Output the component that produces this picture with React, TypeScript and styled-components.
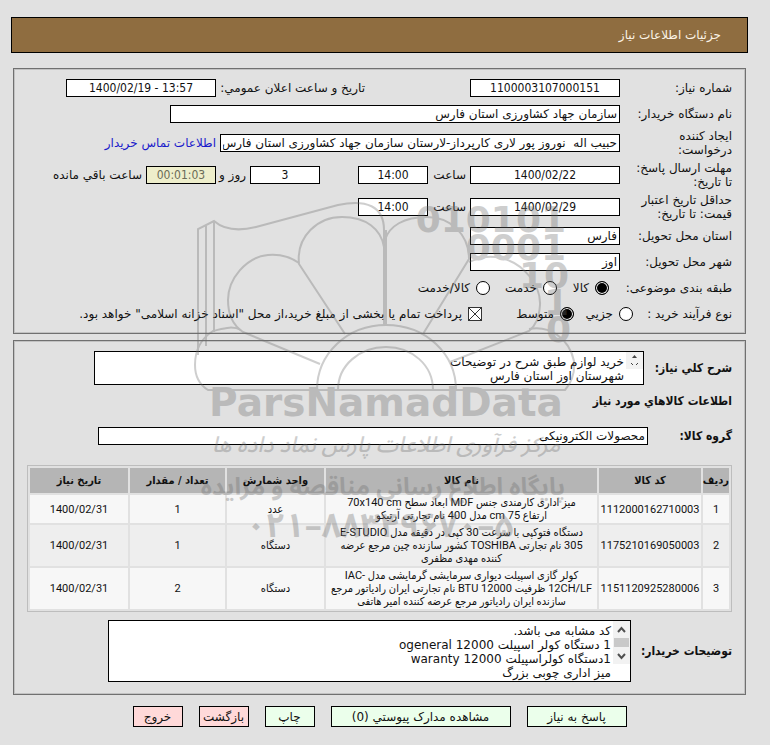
import React, { useId } from "react";
import styled, { createGlobalStyle } from "styled-components";

const GlobalStyle = createGlobalStyle`
  *, *::before, *::after { box-sizing: border-box; }
  body {
    margin: 0;
    background: #e1e1e1;
    color: #111;
    font: 12px/14px "DejaVu Sans", "Noto Sans Arabic", sans-serif;
  }
`;

const Page = styled.main`
  position: relative;
  padding: 17px 22px 17px 11px;
`;

const TitleBar = styled.h1`
  margin: 0 0 15px;
  padding: 0 26px;
  background: #8f6d40;
  border: 1px solid #000;
  color: #fbf3e6;
  font-size: 12px;
  font-weight: 400;
  line-height: 34px;
`;

const Panel = styled.section<{ $pad: string }>`
  margin: 0 2px 6px;
  padding: ${(p) => p.$pad};
  border: 1px solid #707070;
  box-shadow: inset 0 0 0 1px #c2c2c2;
`;

const Row = styled.div<{ $tall?: boolean }>`
  display: flex;
  align-items: center;
  height: ${(p) => (p.$tall ? 32 : 26)}px;
  padding: 0 13px;
  white-space: nowrap;
`;

const Label = styled.label`
  flex: none;
  width: 112px;
`;

const GroupLabel = styled.span<{ $width: number }>`
  flex: none;
  width: ${(p) => p.$width}px;
`;

const SideLabel = styled.label`
  flex: none;
  width: 149px;
  margin-inline-start: 105px;
`;

const Unit = styled.span<{ $width?: number }>`
  flex: none;
  width: ${(p) => (p.$width ? `${p.$width}px` : "auto")};
  padding-inline-start: 4px;
`;

const Field = styled.input<{ $width: number; $center?: boolean; $muted?: boolean; $gap?: number }>`
  width: ${(p) => p.$width}px;
  height: 18px;
  margin: 0;
  margin-inline-start: ${(p) => p.$gap ?? 0}px;
  padding: 0 2px;
  border: 1px solid #000;
  border-radius: 0;
  background: ${(p) => (p.$muted ? "#eeeecb" : "#fff")};
  color: ${(p) => (p.$muted ? "#6b6b58" : "#111")};
  font-family: ${(p) => (p.$center ? '"DejaVu Sans Condensed", ' : "")}"DejaVu Sans", sans-serif;
  font-size: 12px;
  text-align: ${(p) => (p.$center ? "center" : "start")};
`;

const ContactLink = styled.a`
  margin-inline-start: 4px;
  color: #1a1acb;
  text-decoration: none;
`;

const Option = styled.label<{ $width?: number }>`
  display: flex;
  flex: none;
  align-items: center;
  gap: 6px;
  width: ${(p) => (p.$width ? `${p.$width}px` : "auto")};
`;

const Radio = styled.input`
  appearance: none;
  flex: none;
  width: 14px;
  height: 14px;
  margin: 0;
  border: 1px solid #000;
  border-radius: 50%;
  background: #fff;
  &:checked {
    background: #000;
    box-shadow: inset 0 0 0 1px #fff;
  }
`;

const CheckBox = styled.input`
  appearance: none;
  flex: none;
  width: 14px;
  height: 14px;
  margin: 0;
  border: 1px solid #333;
  background: #fff;
  &:checked {
    background:
      linear-gradient(45deg, transparent 46%, #333 47%, #333 53%, transparent 54%),
      linear-gradient(-45deg, transparent 46%, #333 47%, #333 53%, transparent 54%),
      #fff;
  }
`;

const Entry = styled.div<{ $gap?: number }>`
  display: flex;
  align-items: center;
  margin-bottom: ${(p) => p.$gap ?? 0}px;
`;

const BoldLabel = styled.label<{ $width: number }>`
  flex: none;
  width: ${(p) => p.$width}px;
  font-family: "DejaVu Sans Condensed", "DejaVu Sans", sans-serif;
  font-size: 12px;
  font-weight: 700;
  white-space: nowrap;
`;

const Heading = styled.h2`
  margin: 0 0 18px;
  font: 700 12px/16px "DejaVu Sans Condensed", "DejaVu Sans", sans-serif;
`;

const NoteBox = styled.div<{ $width: number; $height: number }>`
  display: flex;
  align-items: flex-start;
  width: ${(p) => p.$width}px;
  height: ${(p) => p.$height}px;
  border: 1px solid #000;
  background: #fff;
`;

const NoteText = styled.textarea`
  flex: 1;
  height: 100%;
  margin: 0;
  padding: 3px 2px 0;
  border: 0;
  outline: 0;
  resize: none;
  overflow: hidden;
  background: transparent;
  color: #111;
  font: 12px/14px "DejaVu Sans", sans-serif;
`;

const ScrollBar = styled.div<{ $height: number }>`
  display: flex;
  flex: none;
  flex-direction: column;
  align-items: center;
  width: 17px;
  height: ${(p) => p.$height}px;
  background: #f2f2f2;
`;

const Table = styled.table`
  width: 100%;
  margin-bottom: 8px;
  border: 1px solid #bdbdbd;
  border-collapse: separate;
  border-spacing: 2px;
  table-layout: fixed;
  background: #e1e1e1;
  font: 11px/13px Roboto, "DejaVu Sans Condensed", "DejaVu Sans", sans-serif;
`;

const Column = styled.col<{ $width?: number }>`
  width: ${(p) => (p.$width ? `${p.$width}px` : "auto")};
`;

const HeadCell = styled.th`
  height: 25px;
  padding: 0;
  background: #b5b5b5;
  font: 700 11px/13px "DejaVu Sans Condensed", "DejaVu Sans", sans-serif;
  white-space: nowrap;
`;

const BodyRow = styled.tr`
  background: #f7f7f7;
  &:nth-child(even) { background: #eee; }
`;

const Cell = styled.td`
  padding: 1px 0;
  text-align: center;
  white-space: nowrap;
`;

const Line = styled.span`
  display: block;
`;

const Actions = styled.div`
  display: flex;
  justify-content: center;
  gap: 16px;
  margin-top: 11px;
`;

const Action = styled.button<{ $width: number; $red?: boolean }>`
  width: ${(p) => p.$width}px;
  height: 21px;
  padding: 0;
  border: 1px solid #000;
  background: ${(p) => (p.$red ? "#ffd9d9" : "#ebffeb")};
  color: #111;
  font: 12px/18px "DejaVu Sans", sans-serif;
  white-space: nowrap;
`;

const Overlay = styled.svg`
  position: absolute;
  top: 195px;
  left: 50%;
  width: 400px;
  height: 360px;
  margin-left: -200px;
  direction: ltr;
  pointer-events: none;
  opacity: 0.33;
`;

function Watermark() {
  return (
    <Overlay viewBox="185 195 400 360" aria-hidden="true">
      <g fill="none" stroke="#6c6c6c" strokeWidth="2">
        <path d="M198 355V229L214 221C222 228 236 232 256 227L338 205C366 199 384 206 384 230V325" />
        <path d="M206 346V226M214 332V221M386 325V230" />
        <path d="M345 334L299 264C296 236 318 217 342 217C366 217 381 229 384 247" />
        <path d="M423 334L469 259C469 234 450 217 427 217C404 217 389 226 385 240" />
        <path d="M299 263C289 256 279 254 268 255C246 257 228 279 228 300C228 315 234 326 243 332L320 364" />
        <path d="M469 262C483 256 491 256 501 258C524 263 541 286 540 305C539 318 536 325 529 331L450 362" />
        <path d="M241 330C232 325 222 329 213 331C202 338 195 350 195 365C195 377 200 385 208 390H565C572 382 575 372 574 361C569 338 549 325 529 329" />
        <path d="M317 390C317 354 347 325 386 325C426 325 456 354 456 390" />
        <path d="M338 390C338 365 360 347 386 347C412 347 433 365 433 390" />
      </g>
      <g fill="#6c6c6c" fontFamily="DejaVu Sans" fontWeight="700" textAnchor="end">
        <g fontSize="36">
          <text x="566" y="232">010101</text>
          <text x="566" y="260">0001</text>
          <text x="569" y="288">10</text>
          <text x="569" y="315">1</text>
          <text x="571" y="342">0</text>
        </g>
        <g textAnchor="middle">
          <text x="386" y="416" fontSize="39">ParsNamadData</text>
          <text x="386" y="452" fontSize="22" fontWeight="500" fontStyle="italic" fontFamily="Noto Sans Arabic">مرکز فرآوری اطلاعات پارس نماد داده ها</text>
          <text x="383" y="495" fontSize="24" fontWeight="700" fontFamily="Noto Sans Arabic">پایگاه اطلاع رسانی مناقصه و مزایده</text>
          <text x="380" y="537" fontSize="34" fontFamily="Noto Sans Arabic">۰۲۱–۸۸۳۴۹۶۷۰–۵</text>
        </g>
      </g>
    </Overlay>
  );
}

const items = [
  {
    code: "1112000162710003",
    name: ["میز اداری کارمندی جنس MDF ابعاد سطح 70x140 cm", "ارتفاع 75 cm مدل 400 نام تجارتی آرتیکو"],
    unit: "عدد",
    count: "1",
    date: "1400/02/31",
  },
  {
    code: "1175210169050003",
    name: [
      "دستگاه فتوکپی با سرعت 30 کپی در دقیقه مدل E-STUDIO",
      "305 نام تجارتی TOSHIBA کشور سازنده چین مرجع عرضه",
      "کننده مهدی مظفری",
    ],
    unit: "دستگاه",
    count: "1",
    date: "1400/02/31",
  },
  {
    code: "1151120925280006",
    name: [
      "کولر گازی اسپیلت دیواری سرمایشی گرمایشی مدل IAC-\u200E",
      "12CH/LF ظرفیت 12000 BTU نام تجارتی ایران رادیاتور مرجع",
      "سازنده ایران رادیاتور مرجع عرضه کننده امیر هاتفی",
    ],
    unit: "دستگاه",
    count: "2",
    date: "1400/02/31",
  },
];

const columnWidths = [26, 102, undefined, 97, 95, 98];
const headings = ["ردیف", "کد کالا", "نام کالا", "واحد شمارش", "تعداد / مقدار", "تاریخ نیاز"];

const summary = "خرید لوازم طبق شرح در توضیحات\nشهرستان اوز استان فارس";
const remarks =
  "کد مشابه می باشد.\n1 دستگاه کولر اسپیلت 12000 ogeneral\n1دستگاه کولراسپیلت 12000 waranty\nمیز اداری چوبی بزرگ";

export default function App() {
  const id = useId();
  return (
    <Page dir="rtl" lang="fa">
      <GlobalStyle />
      <TitleBar>جزئیات اطلاعات نیاز</TitleBar>

      <Panel $pad="6px 0">
        <Row>
          <Label htmlFor={`${id}number`}>شماره نیاز:</Label>
          <Field id={`${id}number`} $width={150} $center defaultValue="1100003107000151" />
          <SideLabel htmlFor={`${id}announce`}>تاریخ و ساعت اعلان عمومي:</SideLabel>
          <Field id={`${id}announce`} dir="ltr" $width={150} $center defaultValue="1400/02/19 - 13:57" />
        </Row>
        <Row>
          <Label htmlFor={`${id}buyer`}>نام دستگاه خریدار:</Label>
          <Field id={`${id}buyer`} $width={450} defaultValue="سازمان جهاد کشاورزی استان فارس" />
        </Row>
        <Row $tall>
          <Label htmlFor={`${id}author`}>ایجاد کننده<br />درخواست:</Label>
          <Field
            id={`${id}author`}
            $width={400}
            defaultValue="حبیب اله  نوروز پور لاری کارپرداز-لارستان سازمان جهاد کشاورزی استان فارس"
          />
          <ContactLink href="#contact">اطلاعات تماس خریدار</ContactLink>
        </Row>
        <Row $tall>
          <Label htmlFor={`${id}reply`}>مهلت ارسال پاسخ:<br />تا تاریخ:</Label>
          <Field id={`${id}reply`} dir="ltr" $width={150} $center defaultValue="1400/02/22" />
          <Unit $width={42}>ساعت</Unit>
          <Field aria-label="ساعت پاسخ" $width={70} $center defaultValue="14:00" />
          <Field aria-label="روز" $width={70} $center $gap={38} defaultValue="3" />
          <Unit $width={34}>روز و</Unit>
          <Field aria-label="زمان باقي مانده" $width={70} $center $muted readOnly defaultValue="00:01:03" />
          <Unit>ساعت باقي مانده</Unit>
        </Row>
        <Row $tall>
          <Label htmlFor={`${id}valid`}>حداقل تاریخ اعتبار<br />قیمت: تا تاریخ:</Label>
          <Field id={`${id}valid`} dir="ltr" $width={150} $center defaultValue="1400/02/29" />
          <Unit $width={42}>ساعت</Unit>
          <Field aria-label="ساعت اعتبار" $width={70} $center defaultValue="14:00" />
        </Row>
        <Row>
          <Label htmlFor={`${id}province`}>استان محل تحویل:</Label>
          <Field id={`${id}province`} $width={150} defaultValue="فارس" />
        </Row>
        <Row>
          <Label htmlFor={`${id}city`}>شهر محل تحویل:</Label>
          <Field id={`${id}city`} $width={150} defaultValue="اوز" />
        </Row>
        <Row>
          <GroupLabel $width={123}>طبقه بندی موضوعی:</GroupLabel>
          <Option $width={52}><Radio type="radio" name="subject" defaultChecked />کالا</Option>
          <Option $width={67}><Radio type="radio" name="subject" />خدمت</Option>
          <Option><Radio type="radio" name="subject" />کالا/خدمت</Option>
        </Row>
        <Row>
          <GroupLabel $width={99}>نوع فرآیند خرید :</GroupLabel>
          <Option $width={59}><Radio type="radio" name="process" />جزیي</Option>
          <Option $width={92}><Radio type="radio" name="process" defaultChecked />متوسط</Option>
          <Option>
            <CheckBox type="checkbox" defaultChecked />
            پرداخت تمام یا بخشی از مبلغ خرید،از محل "اسناد خزانه اسلامی" خواهد بود.
          </Option>
        </Row>
      </Panel>

      <Panel $pad="10px 13px 12px">
        <Entry $gap={8}>
          <BoldLabel htmlFor={`${id}summary`} $width={88}>شرح کلي نیاز:</BoldLabel>
          <NoteBox $width={550} $height={34}>
            <ScrollBar $height={17}>
              <svg width="9" height="15" viewBox="0 0 9 15" aria-hidden="true">
                <path d="M4.500 3L7 6H2Z" fill="#444" />
                <path d="M1 11L3 13M8 11L6 13" stroke="#444" />
              </svg>
            </ScrollBar>
            <NoteText id={`${id}summary`} defaultValue={summary} />
          </NoteBox>
        </Entry>
        <Heading>اطلاعات کالاهاي مورد نیاز</Heading>
        <Entry $gap={20}>
          <BoldLabel htmlFor={`${id}group`} $width={84}>گروه کالا:</BoldLabel>
          <Field id={`${id}group`} $width={550} defaultValue="محصولات الکترونیکی" />
        </Entry>
        <Table>
          <colgroup>{columnWidths.map((w, i) => <Column key={i} $width={w} />)}</colgroup>
          <thead>
            <tr>{headings.map((h) => <HeadCell key={h} scope="col">{h}</HeadCell>)}</tr>
          </thead>
          <tbody>
            {items.map((item, i) => (
              <BodyRow key={item.code}>
                <Cell>{i + 1}</Cell>
                <Cell>{item.code}</Cell>
                <Cell>{item.name.map((line) => <Line key={line}>{line}</Line>)}</Cell>
                <Cell>{item.unit}</Cell>
                <Cell>{item.count}</Cell>
                <Cell>{item.date}</Cell>
              </BodyRow>
            ))}
          </tbody>
        </Table>
        <Entry>
          <BoldLabel htmlFor={`${id}remarks`} $width={101}>توضیحات خریدار:</BoldLabel>
          <NoteBox $width={523} $height={62}>
            <ScrollBar $height={43}>
              <svg width="17" height="43" viewBox="0 0 17 43" aria-hidden="true">
                <path d="M1 17H16V26H1Z" fill="#c9c9c9" />
                <path d="M5 11L8.500 7L12 11M5 33L8.500 37L12 33" fill="none" stroke="#505050" strokeWidth="2" />
              </svg>
            </ScrollBar>
            <NoteText id={`${id}remarks`} defaultValue={remarks} />
          </NoteBox>
        </Entry>
      </Panel>

      <Actions>
        <Action type="button" $width={100}>پاسخ به نیاز</Action>
        <Action type="button" $width={180}>مشاهده مدارک پیوستي (0)</Action>
        <Action type="button" $width={50}>چاپ</Action>
        <Action type="button" $width={50} $red>بازگشت</Action>
        <Action type="button" $width={50} $red>خروج</Action>
      </Actions>
      <Watermark />
    </Page>
  );
}
